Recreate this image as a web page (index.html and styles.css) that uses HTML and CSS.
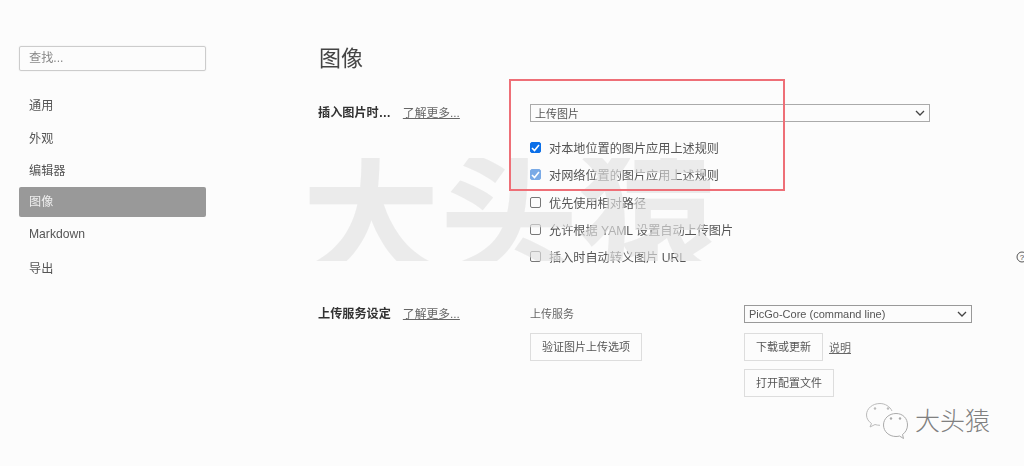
FILE: index.html
```html
<!DOCTYPE html>
<html lang="zh-CN">
<head>
<meta charset="utf-8">
<title>图像</title>
<link rel="stylesheet" href="styles.css">
</head>
<body>
<div class="app">
  <aside class="side">
    <div class="search">查找...</div>
    <nav class="nav">
      <div class="nav-item">通用</div>
      <div class="nav-item">外观</div>
      <div class="nav-item">编辑器</div>
      <div class="nav-item active">图像</div>
      <div class="nav-item">Markdown</div>
      <div class="nav-item">导出</div>
    </nav>
  </aside>
  <main class="main">
    <h1 class="title">图像</h1>
    <section class="row first">
      <div class="label"><b>插入图片时…</b><a class="more">了解更多...</a></div>
      <div class="body">
        <div class="select wide"><span>上传图片</span><svg class="chev" width="10" height="6" viewBox="0 0 10 6"><path d="M1 1l4 4 4-4" fill="none" stroke="#444" stroke-width="1.300"/></svg></div>
        <div class="checks">
          <div class="check"><span class="box on"><svg width="9" height="8" viewBox="0 0 9 8"><path d="M1 4l2.500 2.500L8 1" fill="none" stroke="#fff" stroke-width="1.600"/></svg></span>对本地位置的图片应用上述规则</div>
          <div class="check"><span class="box on dim"><svg width="9" height="8" viewBox="0 0 9 8"><path d="M1 4l2.500 2.500L8 1" fill="none" stroke="#fff" stroke-width="1.600"/></svg></span>对网络位置的图片应用上述规则</div>
          <div class="check"><span class="box"></span>优先使用相对路径</div>
          <div class="check"><span class="box"></span>允许根据 YAML 设置自动上传图片</div>
          <div class="check"><span class="box"></span>插入时自动转义图片 URL</div>
        </div>
      </div>
    </section>
    <section class="row second">
      <div class="label"><b>上传服务设定</b><a class="more">了解更多...</a></div>
      <div class="service">
        <div class="col-left">
          <div class="svc-label">上传服务</div>
          <div class="btn">验证图片上传选项</div>
        </div>
        <div class="col-right">
          <div class="select small"><span>PicGo-Core (command line)</span><svg class="chev" width="10" height="6" viewBox="0 0 10 6"><path d="M1 1l4 4 4-4" fill="none" stroke="#444" stroke-width="1.300"/></svg></div>
          <div class="btn-row"><div class="btn">下载或更新</div><a class="more tight">说明</a></div>
          <div class="btn">打开配置文件</div>
        </div>
      </div>
    </section>
  </main>
</div>
<div class="stamp"><div class="stamp-text">大头猿</div></div>
<div class="redbox"></div>
<svg class="help" width="12" height="12" viewBox="0 0 12 12"><circle cx="6" cy="6" r="5" fill="none" stroke="#555" stroke-width="1"/><text x="6" y="9" font-size="8" text-anchor="middle" fill="#444" font-family="Liberation Sans">?</text></svg>
<div class="mark">
  <svg class="mark-logo" width="45" height="37" viewBox="0 0 45 37">
    <path d="M27 9C25 4.500 20 1.500 15 1.500 7.500 1.500 1.500 6.500 1.500 13c0 3.500 2 6.500 5 8.500L5 25l5-2.500c1.500.5 3 .8 5 .8" fill="none" stroke="#bbb" stroke-width="1"/>
    <path d="M31 11.500c-7 0-12.500 5-12.500 11.500S24 34.500 31 34.500c1.500 0 2.500-.2 3.500-.5l4 2.500-1-4c3-2 5-5.500 5-9.500 0-6.500-4.500-11.500-11.500-11.500z" fill="none" stroke="#aaa" stroke-width="1"/>
    <circle cx="10" cy="6.500" r="1.200" fill="#bbb"/><circle cx="23" cy="6.500" r="1.200" fill="#bbb"/>
    <circle cx="26" cy="16.500" r="1.200" fill="#aaa"/><circle cx="35" cy="16.500" r="1.200" fill="#aaa"/>
  </svg>
  <span class="mark-text">大头猿</span>
</div>
</body>
</html>
```

FILE: styles.css
```css
* { box-sizing: border-box; }
html, body { margin: 0; height: 100%; }
body {
  position: relative;
  width: 1024px;
  height: 466px;
  overflow: hidden;
  background: #fcfcfc;
  color: #444;
  font-family: "Liberation Sans", "Noto Sans CJK SC", sans-serif;
  font-size: 12.150px;
}
.app { display: flex; padding-left: 19px; filter: blur(.35px); }
.side { width: 187px; flex: none; padding-top: 46px; }
.search {
  height: 25px;
  border: 1px solid #ccc;
  border-radius: 2px;
  padding-left: 9px;
  line-height: 23px;
  color: #888;
  box-shadow: 0 0 1px #ccc;
}
.nav { margin-top: 17px; display: flex; flex-direction: column; }
.nav-item {
  height: 32.600px;
  line-height: 36px;
  padding-left: 10px;
  color: #555;
  border-radius: 2px;
}
.nav-item.active { background: #999; color: #eee; height: 30px; line-height: 31px; margin: 1px 0 1px; }
.nav-item:nth-child(5) { line-height: 32px; }
.nav-item:nth-child(6) { line-height: 38px; }
.main { flex: 1; padding-left: 112px; min-width: 0; }
.title { margin: 41px 0 0; padding-left: 1px; font-weight: 400; font-size: 22px; line-height: 35px; height: 35px; color: #444; }
.row { display: grid; grid-template-columns: 212px 1fr; }
.first { margin-top: 28px; }
.second { margin-top: 35px; }
.label { display: flex; gap: 12px; line-height: 18px; height: 18px; }
.label b { color: #333; }
.more { color: #666; text-decoration: underline; font-size: 11.800px; }
.select {
  display: flex;
  align-items: center;
  justify-content: space-between;
  border: 1px solid #aaa;
  background: #fcfcfc;
  padding: 0 4px;
  color: #555;
  font-size: 11px;
}
.wide { width: 400px; height: 18px; }
.small { width: 228px; height: 18px; border-color: #999; font-size: 11px; }
.checks { margin-top: 12px; display: flex; flex-direction: column; }
.check { display: flex; align-items: center; gap: 8px; height: 27.300px; color: #555; }
.box {
  width: 11px; height: 11px;
  border: 1px solid #777;
  border-radius: 2px;
  display: flex; align-items: center; justify-content: center;
  flex: none;
  background: #fcfcfc;
}
.box.on { background: #0b6fe8; border-color: #0b6fe8; }
.box.on.dim { background: #7aaae6; border-color: #7aaae6; }
.service { display: grid; grid-template-columns: 214px 1fr; font-size: 11px; }
.col-left, .col-right { display: flex; flex-direction: column; align-items: flex-start; }
.svc-label { height: 18px; line-height: 18px; color: #666; }
.btn {
  height: 28px;
  line-height: 26px;
  padding: 0 11px;
  border: 1px solid #ddd;
  background: #fcfcfc;
  color: #555;
}
.col-left .btn { margin-top: 10px; }
.btn-row { display: flex; align-items: center; gap: 6px; margin-top: 10px; margin-bottom: 8px; }
.tight { font-size: 11px; }
.stamp {
  position: absolute;
  left: 300px; top: 158px;
  width: 440px; height: 103px;
  overflow: hidden;
  pointer-events: none;
}
.stamp-text {
  font-family: "Noto Sans CJK SC", sans-serif;
  font-weight: 700;
  font-size: 138px;
  line-height: 138px;
  margin-top: -20px;
  margin-left: 2px;
  color: rgba(226, 226, 226, .65);
  white-space: nowrap;
}
.redbox {
  position: absolute;
  left: 509px; top: 79px;
  width: 276px; height: 112px;
  border: 2px solid #ee6f77;
}
.help { position: absolute; left: 1016px; top: 251px; }
.mark { position: absolute; left: 865px; top: 402px; display: flex; align-items: center; gap: 5px; }
.mark-text { font-size: 25px; line-height: 30px; margin-top: -3px; color: #808080; font-family: "Noto Sans CJK SC", sans-serif; font-weight: 300; }
```
